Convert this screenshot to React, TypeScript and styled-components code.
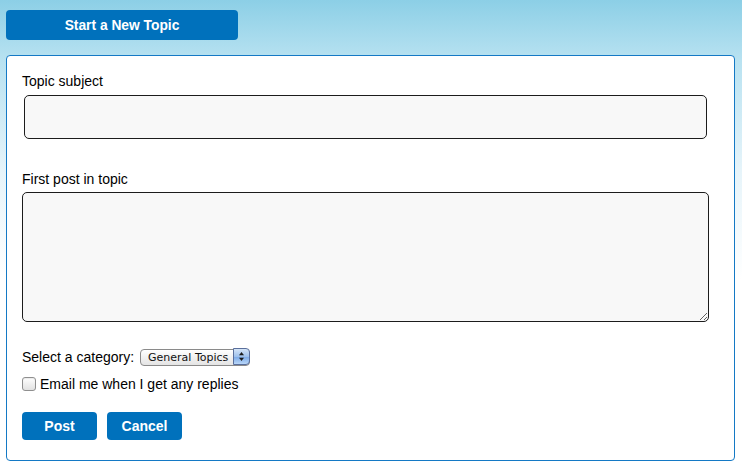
import React from "react";
import styled, { createGlobalStyle } from "styled-components";

const GlobalStyle = createGlobalStyle`
  html, body {
    margin: 0;
    padding: 0;
  }
  body {
    width: 742px;
    height: 467px;
    overflow: hidden;
    font-family: "Liberation Sans", Arial, Helvetica, sans-serif;
    background: linear-gradient(to bottom, #8ccfe6 0px, #b8e2f1 60px, #e6f4fa 170px, #ffffff 280px, #ffffff 100%);
    color: #000;
  }
`;

const Page = styled.div`
  padding: 10px 6px 0 6px;
  display: flex;
  flex-direction: column;
  align-items: flex-start;
`;

const HeaderButton = styled.button`
  width: 232px;
  height: 30px;
  border: none;
  border-radius: 4px;
  background: #0071bc;
  color: #fff;
  font-family: "Liberation Sans", Arial, sans-serif;
  font-weight: bold;
  font-size: 13.8px;
  padding: 0;
  cursor: pointer;
`;

const Panel = styled.form`
  margin-top: 15px;
  width: 729px;
  box-sizing: border-box;
  height: 406px;
  background: #fff;
  border: 1px solid #1479c5;
  border-radius: 4px;
  padding: 17px 15px 20px 15px;
  display: flex;
  flex-direction: column;
`;

const FieldLabel = styled.label<{ $gap: number }>`
  display: block;
  font-size: 14px;
  line-height: 16px;
  margin-bottom: ${(p) => p.$gap}px;
`;

const TextInput = styled.input`
  box-sizing: border-box;
  width: 683px;
  height: 44px;
  margin: 0 0 0 2px;
  border: 1.5px solid #1c1c1c;
  border-radius: 5px;
  background: #f8f8f8;
  font-family: "Liberation Sans", Arial, sans-serif;
  font-size: 13px;
  padding: 4px 8px;
  outline: none;
`;

const TextArea = styled.textarea`
  box-sizing: border-box;
  width: 687px;
  height: 131px;
  margin: 0;
  border: 1.5px solid #1c1c1c;
  border-radius: 5px;
  background: #f8f8f8;
  font-family: "Liberation Sans", Arial, sans-serif;
  font-size: 13px;
  padding: 4px 8px;
  resize: both;
  outline: none;
  display: block;
`;

const Spacer = styled.div<{ $h: number }>`
  height: ${(p) => p.$h}px;
  flex: none;
`;

const CategoryRow = styled.div`
  display: flex;
  align-items: center;
  gap: 6px;
  height: 17px;
  font-size: 14px;
`;

const SelectWrap = styled.div`
  position: relative;
  width: 110px;
  height: 17px;
`;

const Select = styled.select`
  appearance: none;
  -webkit-appearance: none;
  box-sizing: border-box;
  width: 110px;
  height: 17px;
  margin: 0;
  border: 1px solid #8a8a8a;
  border-radius: 4px;
  background: linear-gradient(to bottom, #ffffff 0%, #f1f1f1 50%, #e4e4e4 100%);
  font-family: "Lucida Grande", "DejaVu Sans", "Liberation Sans", sans-serif;
  font-size: 11px;
  line-height: 15px;
  padding: 0 20px 0 7px;
  color: #111;
  outline: none;
`;

const SelectArrows = styled.span`
  position: absolute;
  right: 0;
  top: 0;
  width: 17px;
  height: 17px;
  box-sizing: border-box;
  border: 1px solid #5a6f9c;
  border-radius: 0 4px 4px 0;
  background: linear-gradient(to bottom, #d4e4f7 0%, #9fc1ec 50%, #7aa8e6 51%, #b8d6f8 100%);
  display: flex;
  align-items: center;
  justify-content: center;
  pointer-events: none;
`;

const CheckRow = styled.label`
  display: flex;
  align-items: center;
  gap: 4px;
  height: 16px;
  font-size: 14px;
`;

const CheckBox = styled.input`
  appearance: none;
  -webkit-appearance: none;
  width: 14px;
  height: 14px;
  margin: 0;
  box-sizing: border-box;
  border: 1px solid #8f8f8f;
  border-radius: 3px;
  background: linear-gradient(to bottom, #ffffff 0%, #f0f0f0 50%, #e2e2e2 100%);
  box-shadow: inset 0 1px 1px rgba(0, 0, 0, 0.08);
`;

const ButtonRow = styled.div`
  display: flex;
  gap: 10px;
`;

const ActionButton = styled.button`
  width: 75px;
  height: 28px;
  border: none;
  border-radius: 4px;
  background: #0071bc;
  color: #fff;
  font-family: "Liberation Sans", Arial, sans-serif;
  font-weight: bold;
  font-size: 14px;
  padding: 0;
  cursor: pointer;
`;

export default function App() {
  return (
    <>
      <GlobalStyle />
      <Page>
        <HeaderButton type="button">Start a New Topic</HeaderButton>
        <Panel onSubmit={(e) => e.preventDefault()}>
          <FieldLabel $gap={6} htmlFor="subject">Topic subject</FieldLabel>
          <TextInput id="subject" type="text" />
          <Spacer $h={32} />
          <FieldLabel $gap={5} htmlFor="post">First post in topic</FieldLabel>
          <TextArea id="post" />
          <Spacer $h={26} />
          <CategoryRow>
            <span>Select a category:</span>
            <SelectWrap>
              <Select defaultValue="general">
                <option value="general">General Topics</option>
              </Select>
              <SelectArrows>
                <svg width="7" height="11" viewBox="0 0 7 11">
                  <path d="M3.5 1 L6 4.2 L1 4.2 Z" fill="#1b1b1b" />
                  <path d="M3.5 10 L6 6.8 L1 6.8 Z" fill="#1b1b1b" />
                </svg>
              </SelectArrows>
            </SelectWrap>
          </CategoryRow>
          <Spacer $h={11} />
          <CheckRow>
            <CheckBox type="checkbox" />
            <span>Email me when I get any replies</span>
          </CheckRow>
          <Spacer $h={20} />
          <ButtonRow>
            <ActionButton type="submit">Post</ActionButton>
            <ActionButton type="button">Cancel</ActionButton>
          </ButtonRow>
        </Panel>
      </Page>
    </>
  );
}
